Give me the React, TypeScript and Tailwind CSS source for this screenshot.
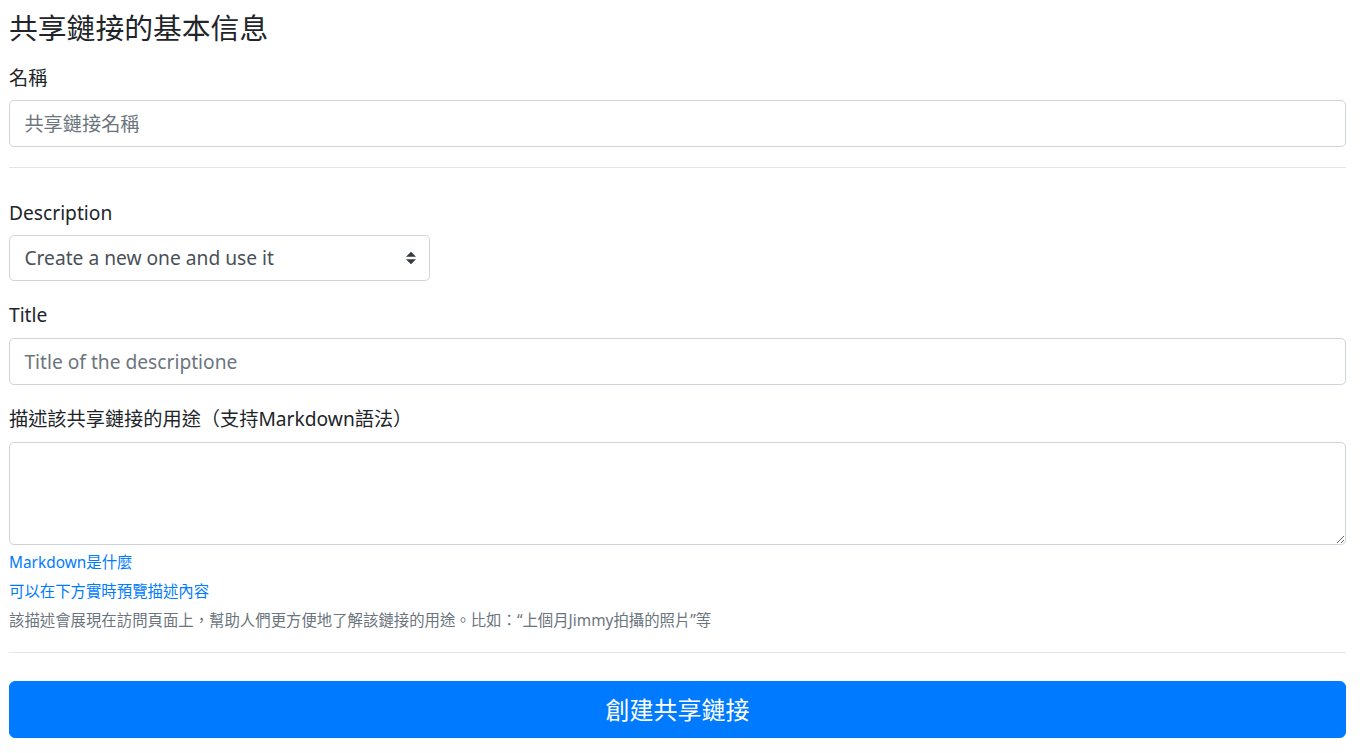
import React from 'react'

const FONT = '"Noto Sans", "Noto Sans CJK TC", sans-serif'

function Label({ children }: { children: React.ReactNode }) {
  return (
    <label className="block text-[19.2px] leading-[28.8px] text-[#212529] pt-[1.5px] mb-[8.1px]">
      {children}
    </label>
  )
}

function Input({ placeholder }: { placeholder: string }) {
  return (
    <input
      type="text"
      placeholder={placeholder}
      className="block w-full h-[46.5px] px-[14.4px] text-[19.2px] text-[#495057] bg-white border border-[#ced4da] rounded-[4.8px] placeholder:text-[#6c757d] outline-none"
    />
  )
}

export default function App() {
  return (
    <div className="bg-white min-h-screen pl-[9px] pr-[20px] pt-[10.5px] text-[#212529]" style={{ fontFamily: FONT }}>
      <h4 className="text-[28.8px] leading-[34.5px] font-normal mb-[17px]">共享鏈接的基本信息</h4>

      <div>
        <Label>名稱</Label>
        <Input placeholder="共享鏈接名稱" />
      </div>

      <hr className="mt-[19.7px] mb-[29.5px] border-0 border-t border-[rgba(0,0,0,0.1)]" />

      <div className="mb-[18.7px]">
        <Label>Description</Label>
        <div className="relative w-[421px]">
          <select
            defaultValue="new"
            className="appearance-none block w-full h-[45.5px] pl-[14.4px] pr-[36px] text-[19.2px] text-[#495057] bg-white border border-[#ced4da] rounded-[4.8px] outline-none"
          >
            <option value="new">Create a new one and use it</option>
          </select>
          <svg
            className="absolute right-[14px] top-1/2 -translate-y-1/2 pointer-events-none"
            width="10"
            height="13"
            viewBox="0 0 4 5"
          >
            <path fill="#343a40" d="M2 0L0 2h4zm0 5L0 3h4z" />
          </svg>
        </div>
      </div>

      <div className="mb-[18.7px]">
        <Label>Title</Label>
        <Input placeholder="Title of the descriptione" />
      </div>

      <div>
        <Label>描述該共享鏈接的用途（支持Markdown語法）</Label>
        <textarea
          rows={3}
          className="block w-full h-[103px] px-[14.4px] py-[7.2px] text-[19.2px] leading-[28.8px] text-[#495057] bg-white border border-[#ced4da] rounded-[4.8px] outline-none resize-y"
        />
        <div className="text-[15.4px] leading-[23px]">
          <a href="#" className="block mt-[6px] text-[#007bff]">Markdown是什麼</a>
          <a href="#" className="block mt-[6px] text-[#007bff]">可以在下方實時預覽描述內容</a>
          <small className="block mt-[6px] text-[15.4px] text-[#6c757d]">
            該描述會展現在訪問頁面上，幫助人們更方便地了解該鏈接的用途。比如：“上個月Jimmy拍攝的照片”等
          </small>
        </div>
      </div>

      <hr className="mt-[20px] mb-[28.5px] border-0 border-t border-[rgba(0,0,0,0.1)]" />

      <button
        type="button"
        className="block w-full h-[57px] rounded-[6px] bg-[#007bff] border border-[#007bff] text-white text-[24px] leading-[36px]"
      >
        創建共享鏈接
      </button>
    </div>
  )
}
